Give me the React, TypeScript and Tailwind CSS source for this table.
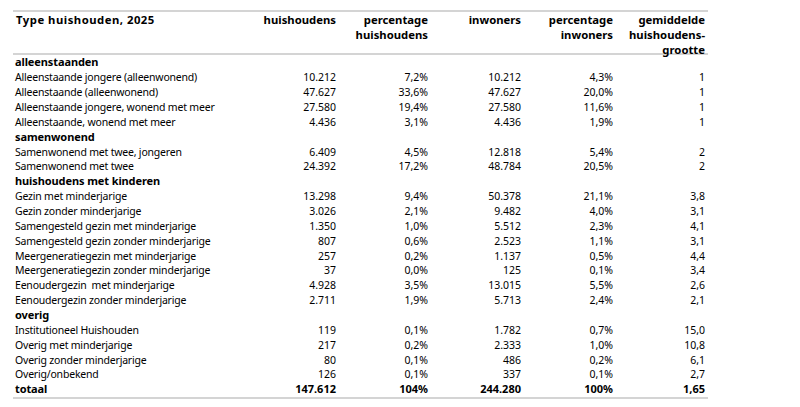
type Row =
  | { kind: 'group'; label: string }
  | { kind: 'item'; label: string; values: string[] }
  | { kind: 'total'; label: string; values: string[] };

const rows: Row[] = [
  { kind: 'group', label: 'alleenstaanden' },
  { kind: 'item', label: 'Alleenstaande jongere (alleenwonend)', values: ['10.212', '7,2%', '10.212', '4,3%', '1'] },
  { kind: 'item', label: 'Alleenstaande (alleenwonend)', values: ['47.627', '33,6%', '47.627', '20,0%', '1'] },
  { kind: 'item', label: 'Alleenstaande jongere, wonend met meer', values: ['27.580', '19,4%', '27.580', '11,6%', '1'] },
  { kind: 'item', label: 'Alleenstaande, wonend met meer', values: ['4.436', '3,1%', '4.436', '1,9%', '1'] },
  { kind: 'group', label: 'samenwonend' },
  { kind: 'item', label: 'Samenwonend met twee, jongeren', values: ['6.409', '4,5%', '12.818', '5,4%', '2'] },
  { kind: 'item', label: 'Samenwonend met twee', values: ['24.392', '17,2%', '48.784', '20,5%', '2'] },
  { kind: 'group', label: 'huishoudens met kinderen' },
  { kind: 'item', label: 'Gezin met minderjarige', values: ['13.298', '9,4%', '50.378', '21,1%', '3,8'] },
  { kind: 'item', label: 'Gezin zonder minderjarige', values: ['3.026', '2,1%', '9.482', '4,0%', '3,1'] },
  { kind: 'item', label: 'Samengesteld gezin met minderjarige', values: ['1.350', '1,0%', '5.512', '2,3%', '4,1'] },
  { kind: 'item', label: 'Samengesteld gezin zonder minderjarige', values: ['807', '0,6%', '2.523', '1,1%', '3,1'] },
  { kind: 'item', label: 'Meergeneratiegezin met minderjarige', values: ['257', '0,2%', '1.137', '0,5%', '4,4'] },
  { kind: 'item', label: 'Meergeneratiegezin zonder minderjarige', values: ['37', '0,0%', '125', '0,1%', '3,4'] },
  { kind: 'item', label: 'Eenoudergezin  met minderjarige', values: ['4.928', '3,5%', '13.015', '5,5%', '2,6'] },
  { kind: 'item', label: 'Eenoudergezin zonder minderjarige', values: ['2.711', '1,9%', '5.713', '2,4%', '2,1'] },
  { kind: 'group', label: 'overig' },
  { kind: 'item', label: 'Institutioneel Huishouden', values: ['119', '0,1%', '1.782', '0,7%', '15,0'] },
  { kind: 'item', label: 'Overig met minderjarige', values: ['217', '0,2%', '2.333', '1,0%', '10,8'] },
  { kind: 'item', label: 'Overig zonder minderjarige', values: ['80', '0,1%', '486', '0,2%', '6,1'] },
  { kind: 'item', label: 'Overig/onbekend', values: ['126', '0,1%', '337', '0,1%', '2,7'] },
  { kind: 'total', label: 'totaal', values: ['147.612', '104%', '244.280', '100%', '1,65'] },
];

const headers = [
  ['huishoudens'],
  ['percentage', 'huishoudens'],
  ['inwoners'],
  ['percentage', 'inwoners'],
  ['gemiddelde', 'huishoudens-', 'grootte'],
];

const grid = 'grid grid-cols-[234px_92px_92px_93px_92px_92px]';

export default function App() {
  return (
    <div className="w-[800px] h-[407px] bg-white text-black" style={{ fontFamily: '"Noto Sans", "Open Sans", sans-serif' }}>
      <div className="pt-[10px] pl-[13px]">
        <div className="w-[695px] border-t-2 border-b-2 border-[#d4d4d4]">
          {/* kop */}
          <div className={`${grid} h-[43px] border-b-2 border-[#d4d4d4] font-bold text-[11.3px] leading-[15px]`}>
            <div className="pl-[3px] tracking-[0.5px]">Type huishouden, 2025</div>
            {headers.map((lines, i) => (
              <div key={i} className="text-right pr-[3px]">
                {lines.map((l) => (
                  <div key={l}>{l}</div>
                ))}
              </div>
            ))}
          </div>

          {rows.map((r) => (
            <div
              key={r.label}
              className={`${grid} h-[14.86px] items-center leading-[14px] ${r.kind === 'item' ? 'text-[10.5px]' : 'font-bold text-[11px]'}`}
            >
              <div className={`pl-[2px] whitespace-pre ${r.kind === 'item' ? 'tracking-[-0.2px]' : 'tracking-[-0.1px]'}`}>{r.label}</div>
              {r.kind !== 'group' &&
                r.values.map((v, i) => (
                  <div key={i} className="text-right pr-[3px]">
                    {v}
                  </div>
                ))}
            </div>
          ))}
        </div>
      </div>
    </div>
  );
}
